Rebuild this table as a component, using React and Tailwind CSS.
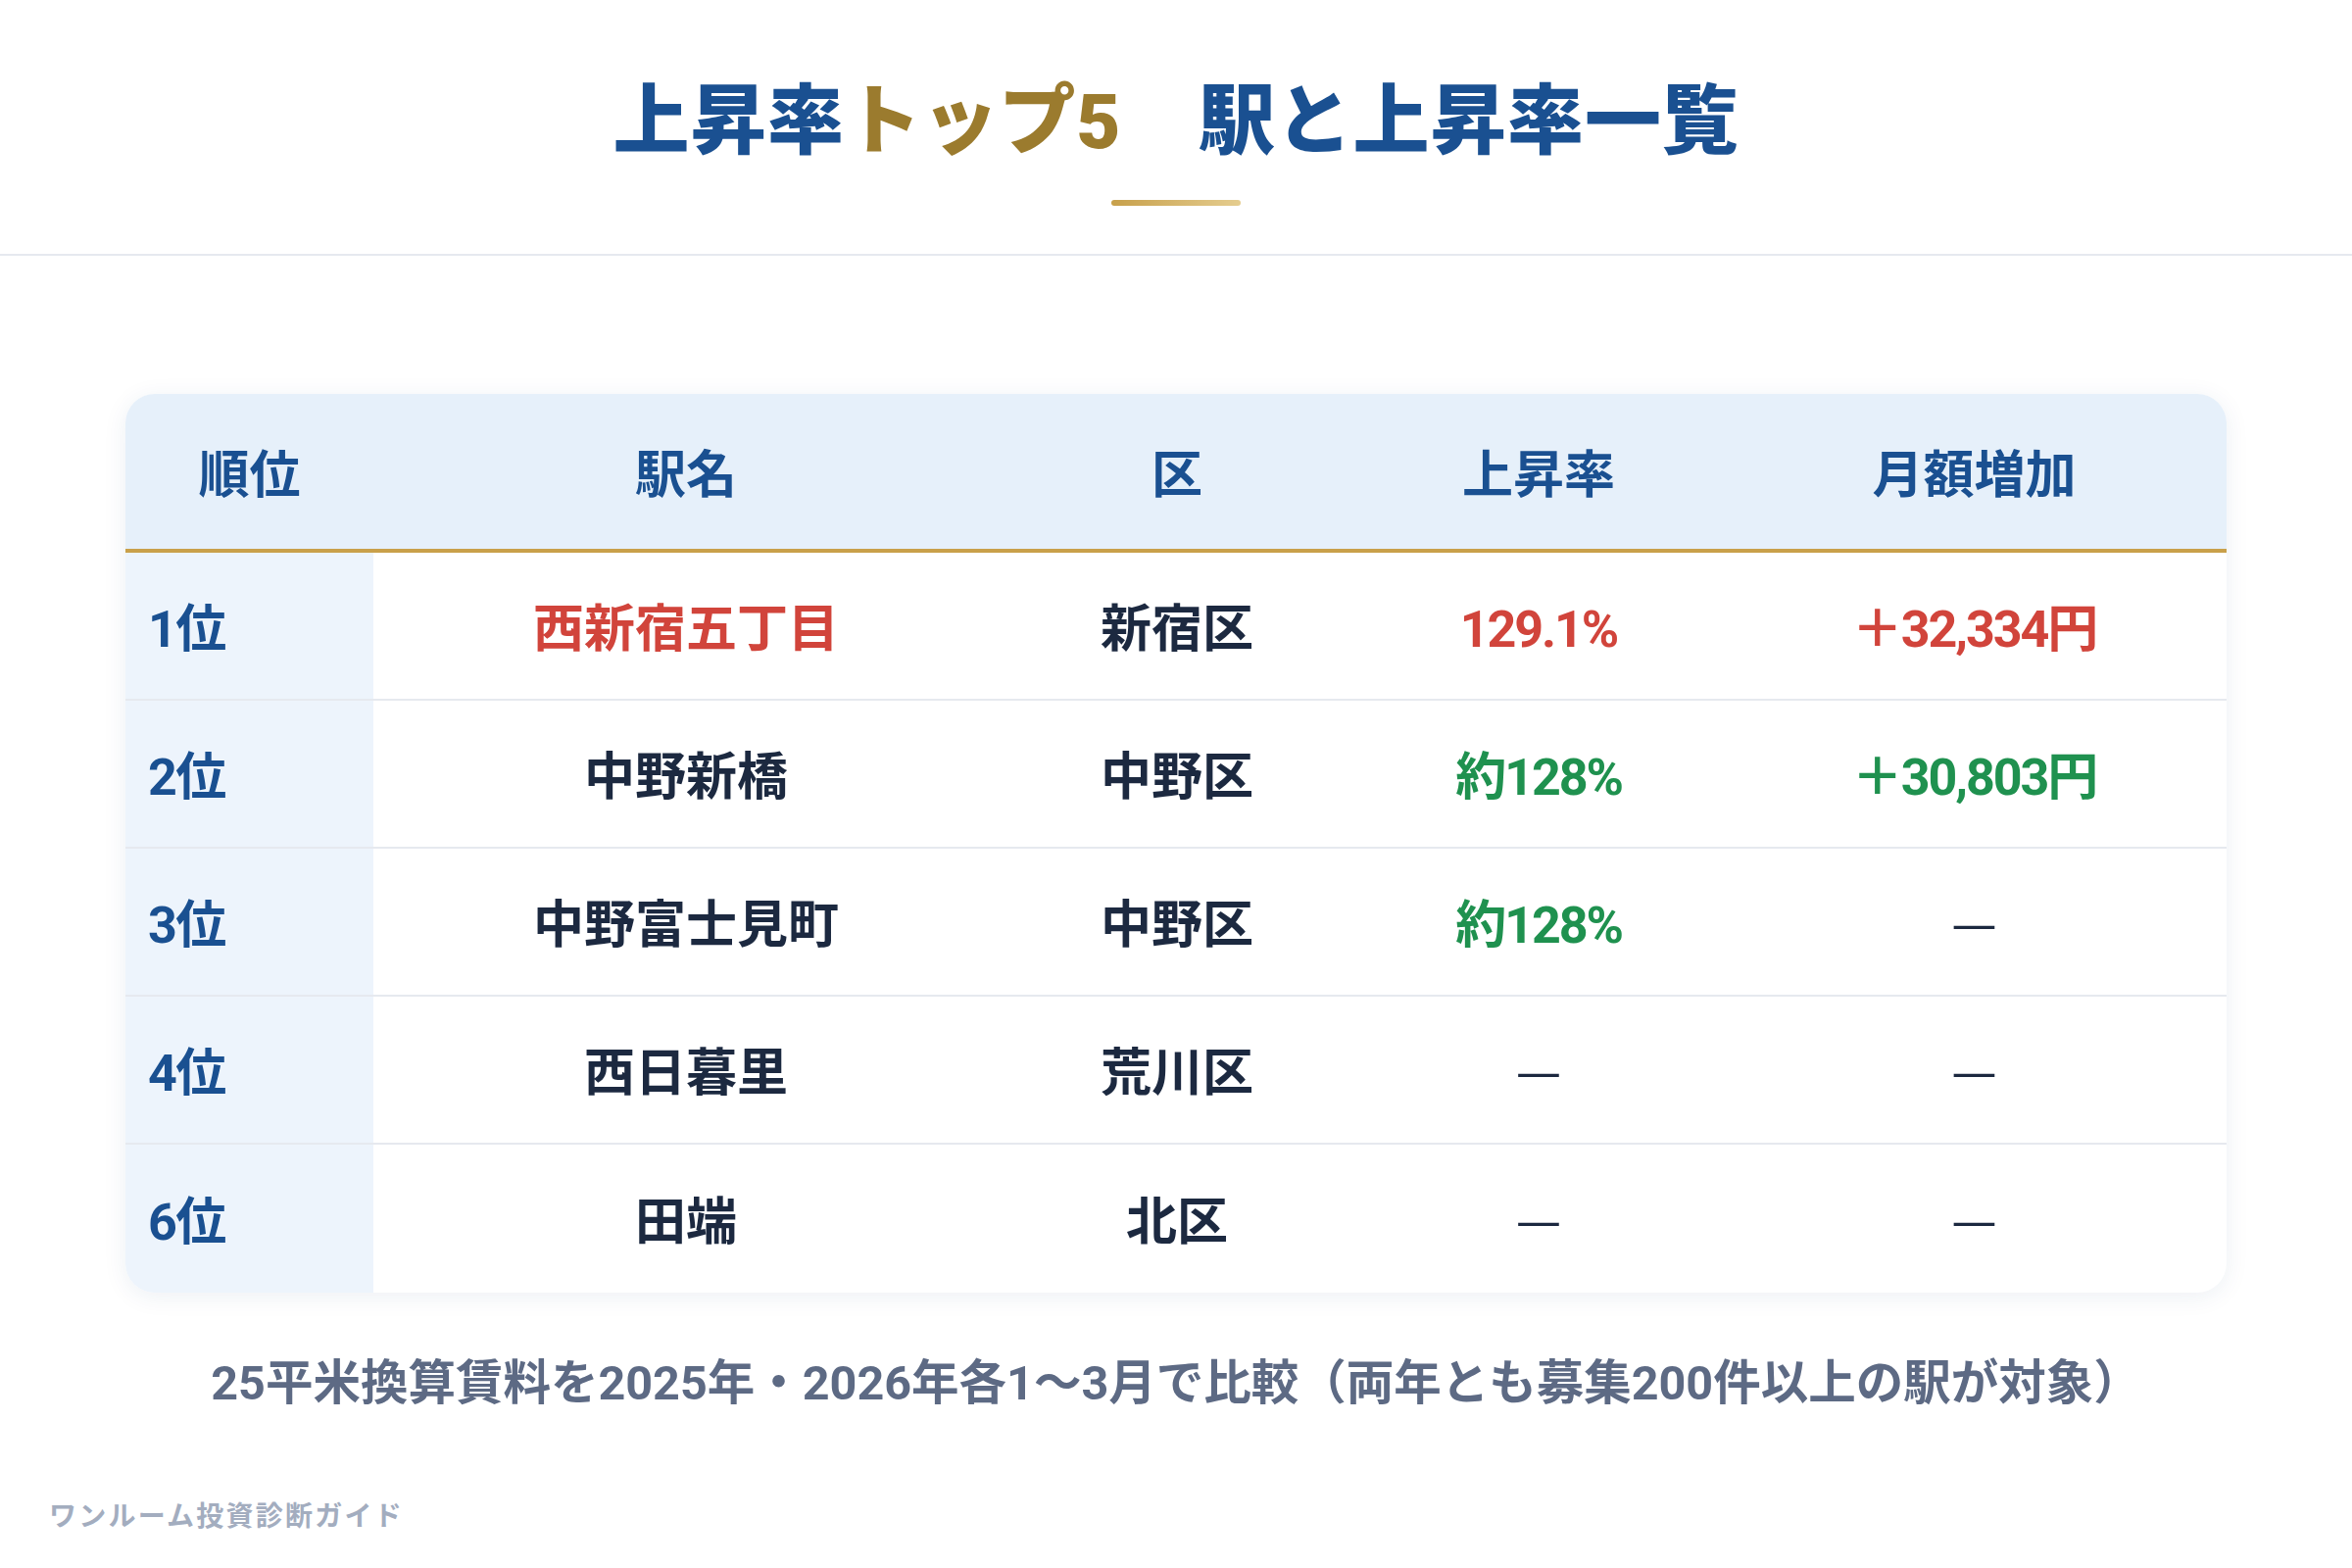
import React from "react";

const rows = [
  { rank: "1位", name: "西新宿五丁目", ward: "新宿区", rate: "129.1%", inc: "＋32,334円", tone: "red", nameRed: true },
  { rank: "2位", name: "中野新橋", ward: "中野区", rate: "約128%", inc: "＋30,803円", tone: "green" },
  { rank: "3位", name: "中野富士見町", ward: "中野区", rate: "約128%", inc: null, tone: "green" },
  { rank: "4位", name: "西日暮里", ward: "荒川区", rate: null, inc: null },
  { rank: "6位", name: "田端", ward: "北区", rate: null, inc: null },
];

const cols = "grid grid-cols-[253px_638px_364px_374px_515px]";

const toneClass = (tone) =>
  tone === "red" ? "text-[#d1443b]" : tone === "green" ? "text-[#1f914f]" : "text-[#1c2940]";

// em dash from the CJK font (full width)
const Dash = () => (
  <span className="inline-block -translate-y-[6px] text-[#1c2940] font-normal tracking-normal font-['Noto_Sans_CJK_JP',sans-serif]">
    —
  </span>
);

export default function App() {
  return (
    <div
      className="w-full h-[1600px] bg-white flex flex-col"
      style={{ fontFamily: 'Roboto, "Noto Sans CJK JP", sans-serif' }}
    >
      {/* header */}
      <header className="flex flex-col items-center pt-[86px] pb-[49px] border-b-2 border-[#e6e9ef]">
        <h1 className="text-[78px] leading-none font-black text-[#1a5091] tracking-[0.01em]">
          上昇率<span className="text-[#9b7b2e]">トップ5</span>　駅と上昇率一覧
        </h1>
        <div className="mt-[40px] h-[6px] w-[132px] rounded-full bg-gradient-to-r from-[#c7a04a] to-[#e5cd8f]" />
      </header>

      {/* table */}
      <div className="mx-[128px] mt-[141px] rounded-[30px] overflow-hidden bg-white shadow-[0_4px_24px_rgba(30,60,110,0.08)]">
        <div className={`${cols} h-[162px] pt-[10px] bg-[#e6f0fa] border-b-4 border-[#c9a04a] items-center text-[52px] font-bold text-[#1a5091]`}>
          <div className="text-center">順位</div>
          <div className="text-center">駅名</div>
          <div className="text-center">区</div>
          <div className="text-center">上昇率</div>
          <div className="text-center">月額増加</div>
        </div>
        {rows.map((r, i) => (
          <div
            key={r.rank}
            className={`${cols} h-[151px] text-[52px] font-bold ${i < rows.length - 1 ? "border-b-2 border-[#e6e9ef]" : ""}`}
          >
            <div className="bg-[#edf4fc] flex items-center pt-[8px] pl-[23px] text-[#1a5091] tracking-[-0.03em]">
              {r.rank}
            </div>
            <div className={`flex items-center justify-center pt-[8px] ${r.nameRed ? "text-[#d1443b]" : "text-[#1c2940]"}`}>
              {r.name}
            </div>
            <div className="flex items-center justify-center pt-[8px] text-[#1c2940]">{r.ward}</div>
            <div className={`flex items-center justify-center pt-[8px] tracking-[-0.04em] ${toneClass(r.tone)}`}>
              {r.rate ? r.rate : <Dash />}
            </div>
            <div className={`flex items-center justify-center pt-[8px] tracking-[-0.04em] ${toneClass(r.tone)}`}>
              {r.inc ? r.inc : <Dash />}
            </div>
          </div>
        ))}
      </div>

      {/* note */}
      <p className="mt-[62px] text-center text-[48.5px] leading-[62px] font-bold text-[#5d6a84]">
        25平米換算賃料を2025年・2026年各1〜3月で比較（両年とも募集200件以上の駅が対象）
      </p>

      <div className="mt-auto pl-[50px] pb-[34px] text-[28px] leading-[36px] font-bold tracking-[0.08em] text-[#a3adbf]">
        ワンルーム投資診断ガイド
      </div>
    </div>
  );
}
